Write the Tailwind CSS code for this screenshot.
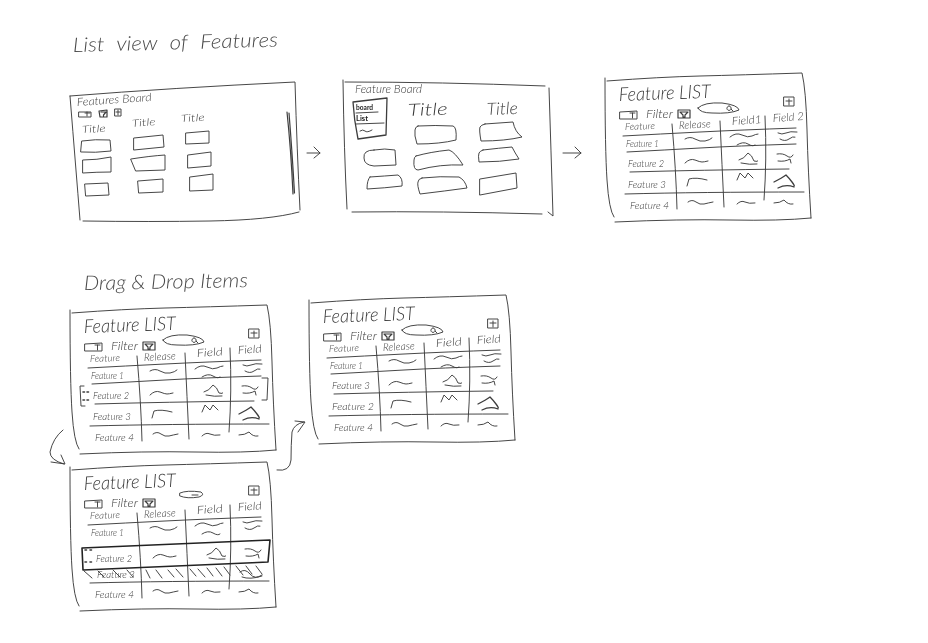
<!DOCTYPE html>
<html lang="en">
<head>
<meta charset="utf-8">
<title>Feature sketches</title>
<script src="https://cdn.jsdelivr.net/npm/@tailwindcss/browser@4"></script>
</head>
<body class="bg-white">
<main class="w-[928px] h-[643px] overflow-hidden bg-white">
<svg viewBox="0 0 928 643" width="928" height="643" class="block blur-[0.35px] font-['Lato'] fill-none stroke-[#3d3d3d] stroke-[0.95px]" stroke-linecap="round" stroke-linejoin="round">
<defs>
  <g id="base">
    <path d="M605 78 Q605 150 607 180 T614 217"/>
    <path d="M607 81 Q660 77 700 76 T802 73 Q806 90 807 130 T811 218"/>
    <path d="M615 222 Q680 219 730 220 T811 218"/>
    <g class="fill-[#3a3a3a] stroke-none font-light italic">
      <text x="619" y="101" font-size="19" textLength="92" lengthAdjust="spacingAndGlyphs" transform="rotate(-2 619 101)">Feature LIST</text>
      <text x="646" y="118" font-size="11" textLength="27" lengthAdjust="spacingAndGlyphs">Filter</text>
      <text x="625" y="130" font-size="9.5" textLength="30" lengthAdjust="spacingAndGlyphs" transform="rotate(-2 625 130)">Feature</text>
      <text x="679" y="129" font-size="10.5" textLength="32" lengthAdjust="spacingAndGlyphs" transform="rotate(-3 679 129)">Release</text>
    </g>
    <path d="M620 112 L637 111 L637 119 L620 119 Z M630 113 H635 M632.5 113 V118"/>
    <path d="M678 110 L690 110 L690 118 L678 118 Z M680 112 H688 L685 115 V117 H683 V115 Z" class="stroke-[1.2px]"/>
    <path d="M784 97 L794 97 L794 106 L784 106 Z M789 99 V105 M786 101 H792"/>
    <path d="M672 124 Q676 170 677 209"/>
    <path d="M720 121 Q722 165 724 207"/>
    <path d="M765 116 Q767 160 764 200"/>
    <path d="M623 136 Q660 134 700 132 T796 128"/>
  </g>
  <path id="lines" d="M627 152 Q665 150 700 148 T796 144 M630 172 Q700 170 789 169 M625 194 Q700 192 804 192"/>
  <path id="oval" d="M698 108 Q704 102 722 103 Q738 105 739 110 Q730 114 712 113 Q700 113 698 108 Z M729 106 A2.2 2.2 0 1 0 729.1 106 M731 109 L733 111"/>
  <g id="sq1">
    <path d="M685 139 Q690 136 695 139 T705 141 T712 138"/>
    <path d="M730 137 Q736 132 742 135 T752 136 T758 134 M737 145 Q743 141 748 144 T755 145"/>
    <path d="M778 133 Q782 135 786 133 T797 132 M780 139 Q785 142 789 139 T795 137"/>
  </g>
  <g id="sq2">
    <path d="M685 163 Q690 158 695 160 T702 162 T708 161"/>
    <path d="M739 160 Q744 159 748 153 Q752 155 754 161 Q758 162 758 161 M741 163 Q750 165 757 164"/>
    <path d="M777 154 Q783 153 787 156 T793 155 M778 161 Q785 162 790 159 L791 163"/>
  </g>
  <g id="sq3">
    <path d="M687 186 L689 179 Q696 177 707 180"/>
    <path d="M737 180 L740 173 L745 178 L748 173 L753 178"/>
    <path d="M774 182 Q782 178 786 175 Q789 178 792 182 T794 186 M778 188 Q786 184 794 187" class="stroke-[1.3px]"/>
  </g>
  <g id="sq4">
    <path d="M688 202 Q692 199 696 202 T704 204 T713 202"/>
    <path d="M737 204 Q741 200 745 202 T755 203"/>
    <path d="M774 203 Q780 203 784 200 Q788 205 793 204"/>
  </g>
  <g id="rows">
    <use href="#sq1"/><use href="#sq2"/><use href="#sq3"/><use href="#sq4"/>
  </g>
  <g id="f1" class="fill-[#3a3a3a] stroke-none font-light italic"><text x="626" y="147" font-size="9.5" textLength="33" lengthAdjust="spacingAndGlyphs">Feature 1</text></g>
  <g id="f2" class="fill-[#3a3a3a] stroke-none font-light italic"><text x="628" y="167" font-size="10" textLength="36" lengthAdjust="spacingAndGlyphs">Feature 2</text></g>
  <g id="f3" class="fill-[#3a3a3a] stroke-none font-light italic"><text x="628" y="188" font-size="10.5" textLength="38" lengthAdjust="spacingAndGlyphs">Feature 3</text></g>
  <g id="f4" class="fill-[#3a3a3a] stroke-none font-light italic"><text x="630" y="209" font-size="10.5" textLength="39" lengthAdjust="spacingAndGlyphs">Feature 4</text></g>
  <g id="fields" class="fill-[#3a3a3a] stroke-none font-light italic">
    <text x="732" y="125" font-size="11" textLength="26" lengthAdjust="spacingAndGlyphs" transform="rotate(-4 732 125)">Field</text>
    <text x="773" y="122" font-size="11" textLength="24" lengthAdjust="spacingAndGlyphs" transform="rotate(-4 773 122)">Field</text>
  </g>
</defs>

<!-- headings -->
<g class="fill-[#4a4a4a] stroke-none font-light italic">
  <text x="73" y="52" font-size="20" textLength="205" lengthAdjust="spacingAndGlyphs" transform="rotate(-1.5 73 52)" word-spacing="6">List view of Features</text>
  <text x="84" y="290" font-size="20" textLength="164" lengthAdjust="spacingAndGlyphs" transform="rotate(-1 84 290)">Drag &amp; Drop Items</text>
</g>

<!-- panel 1: board -->
<path d="M70 96 Q76 170 80 220"/>
<path d="M70 96 Q170 88 295 82 Q297 150 300 210"/>
<path d="M83 221 Q150 222 210 221 T299 212"/>
<g class="fill-[#3a3a3a] stroke-none font-light italic">
  <text x="77" y="106" font-size="11" textLength="75" lengthAdjust="spacingAndGlyphs" transform="rotate(-4 77 106)">Features Board</text>
  <text x="82" y="133" font-size="10" textLength="24" lengthAdjust="spacingAndGlyphs" transform="rotate(-3 82 133)">Title</text>
  <text x="132" y="127" font-size="10" textLength="24" lengthAdjust="spacingAndGlyphs" transform="rotate(-5 132 127)">Title</text>
  <text x="181" y="122" font-size="10" textLength="24" lengthAdjust="spacingAndGlyphs" transform="rotate(-3 181 122)">Title</text>
</g>
<path d="M79 112 H91 V117 H79 Z M87 112 V116 M85 113 H90"/>
<path d="M99 111 L107 110 V117 H100 Z M101 112 H106 L103.500 115 V116" class="stroke-[1.2px]"/>
<path d="M115 109 H121 V116 H115 Z M118 110 V115 M116 112 H120"/>
<path d="M82 141 Q95 139 110 140 L111 151 Q95 153 81 152 Z"/>
<path d="M83 160 Q97 160 111 157 L111 172 Q97 172 83 173 Z"/>
<path d="M85 184 L108 183 L109 195 L86 196 Z"/>
<path d="M134 138 L163 135 L164 147 L134 150 Z"/>
<path d="M131 159 Q150 156 165 155 L165 170 L136 171 Z"/>
<path d="M138 181 L163 179 L163 192 L139 193 Z"/>
<path d="M186 133 L209 131 L209 143 L186 144 Z"/>
<path d="M188 155 L211 152 L211 166 L188 168 Z"/>
<path d="M190 177 L213 174 L213 190 L190 191 Z"/>
<path d="M287 112 Q291 150 293 194 M289 113 Q292 150 294.500 193" class="stroke-[1.2px]"/>
<path d="M307 153 H320 M314 147 L320 153 L314 158"/>

<!-- panel 2: board with menu -->
<path d="M343 80 Q344 150 347 209"/>
<path d="M345 82 Q440 82 545 86"/>
<path d="M549 88 Q551 150 553 216 L548 212"/>
<path d="M352 212 Q440 211 542 214"/>
<path d="M353 102 L387 98 L386 135 L358 139 Q354 120 353 102 Z" class="stroke-[1.3px]"/>
<path d="M356 113 L378 112 M356 124 L384 123 M360 131 Q363 129 365 131 T372 130"/>
<g class="fill-[#3a3a3a] stroke-none font-light italic">
  <text x="355" y="93" font-size="11" textLength="67" lengthAdjust="spacingAndGlyphs">Feature Board</text>
  <text x="408" y="116" font-size="17" textLength="40" lengthAdjust="spacingAndGlyphs" transform="rotate(-2 408 116)">Title</text>
  <text x="487" y="115" font-size="17" textLength="31" lengthAdjust="spacingAndGlyphs" transform="rotate(-2 487 115)">Title</text>
</g>
<g class="fill-[#222] stroke-none font-bold">
  <text x="356" y="110" font-size="6.500" textLength="17" lengthAdjust="spacingAndGlyphs">board</text>
  <text x="356" y="121" font-size="6.500" textLength="12" lengthAdjust="spacingAndGlyphs">List</text>
</g>
<path d="M418 126 Q435 125 453 126 Q457 127 456 140 Q440 144 417 144 Q414 135 415 130 Q415 127 418 126 Z"/>
<path d="M416 156 Q430 152 449 150 Q455 152 463 165 Q440 164 418 170 Q413 170 414 160 Q414 157 416 156 Z"/>
<path d="M422 178 Q440 176 459 177 Q465 180 467 188 Q445 191 420 194 Q417 185 418 182 Q418 179 422 178 Z"/>
<path d="M485 124 L513 122 Q515 132 522 137 Q505 141 481 141 Q479 130 480 127 Q481 125 485 124 Z"/>
<path d="M483 150 Q500 148 512 147 Q515 153 519 159 Q500 162 479 162 Q478 155 479 153 Q480 151 483 150 Z"/>
<path d="M480 179 L516 173 L517 188 L480 195 Z"/>
<path d="M374 150 Q363 150 364 158 Q364 165 374 166 L396 165 L395 150 Q385 148 374 150 Z"/>
<path d="M370 177 Q385 176 398 175 Q403 178 402 186 Q385 188 367 189 Q367 180 370 177 Z"/>
<path d="M563 153 H581 M575 147 L581 153 L575 158"/>

<!-- panel 3 -->
<use href="#base"/><use href="#lines"/><use href="#oval"/><use href="#rows"/>
<use href="#f1"/><use href="#f2"/><use href="#f3"/><use href="#f4"/>
<g class="fill-[#3a3a3a] stroke-none font-light italic">
  <text x="732" y="125" font-size="11" textLength="30" lengthAdjust="spacingAndGlyphs" transform="rotate(-4 732 125)">Field1</text>
  <text x="773" y="122" font-size="11" textLength="31" lengthAdjust="spacingAndGlyphs" transform="rotate(-4 773 122)">Field 2</text>
</g>

<!-- panel A: picked up -->
<g transform="translate(-535 232)">
  <use href="#base"/><use href="#lines"/><use href="#oval"/><use href="#rows"/><use href="#fields"/>
  <use href="#f1"/><use href="#f2"/><use href="#f3"/><use href="#f4"/>
</g>
<path d="M84 386 L80 386 L81 406 L85 406 M262 378 L268 378 L267 400 L262 400"/>
<path d="M83 392 h1.500 M87 392 h1.500 M83 400 h1.500 M87 400 h1.500" class="stroke-[1.6px]"/>

<!-- panel B: dropped -->
<g transform="translate(-296 222)">
  <use href="#base"/><use href="#lines"/><use href="#oval"/><use href="#rows"/><use href="#fields"/>
  <use href="#f1"/><use href="#f4"/>
  <g class="fill-[#3a3a3a] stroke-none font-light italic">
    <text x="628" y="167" font-size="10" textLength="38" lengthAdjust="spacingAndGlyphs">Feature 3</text>
    <text x="628" y="188" font-size="10.5" textLength="42" lengthAdjust="spacingAndGlyphs">Feature 2</text>
  </g>
</g>

<!-- panel C: dragging -->
<g transform="translate(-535 389)">
  <use href="#base"/><use href="#sq1"/><use href="#sq4"/><use href="#fields"/>
  <use href="#f1"/><use href="#f4"/>
  <path d="M625 194 Q700 192 804 192"/>
  <path d="M715 104 Q722 101 736 103 Q740 106 734 108 Q722 110 715 107 Z M727 106 H733"/>
  <g transform="translate(3 6)"><use href="#sq2"/><use href="#f2"/></g>
</g>
<path d="M82 548 Q170 544 270 540 L268 562 Q170 566 83 570 Z" class="stroke-[#222] stroke-[1.6px]"/>
<path d="M85 550 h1.500 M90 550 h1.500 M85 562 h1.500 M90 562 h1.500" class="stroke-[1.6px]"/>
<path d="M84 571 L92 578 M98 571 L104 577 M113 570 L120 577 M127 570 L133 577 M146 570 L150 578 M156 570 L162 578 M168 570 L174 577 M176 569 L183 577 M190 569 L196 576 M198 569 L205 577 M207 568 L213 576 M216 568 L222 576 M224 567 L230 575 M236 566 L243 575 M246 566 L252 574 M256 566 L262 574"/>
<g class="fill-[#3a3a3a] stroke-none font-light italic"><text x="97" y="578" font-size="9" textLength="38" lengthAdjust="spacingAndGlyphs">Feature 3</text></g>
<path d="M240 572 Q245 568 250 574 T262 575 M242 577 Q250 580 262 576"/>

<!-- connecting arrows -->
<path d="M63 430 Q53 438 50 452 Q50 460 64 464 M51 462 L65 464 L61 455"/>
<path d="M277 470 Q290 472 291 460 Q291 445 292 432 Q294 424 304 422 M295 421 L305 422 L298 432"/>
</svg>
</main>
</body>
</html>
